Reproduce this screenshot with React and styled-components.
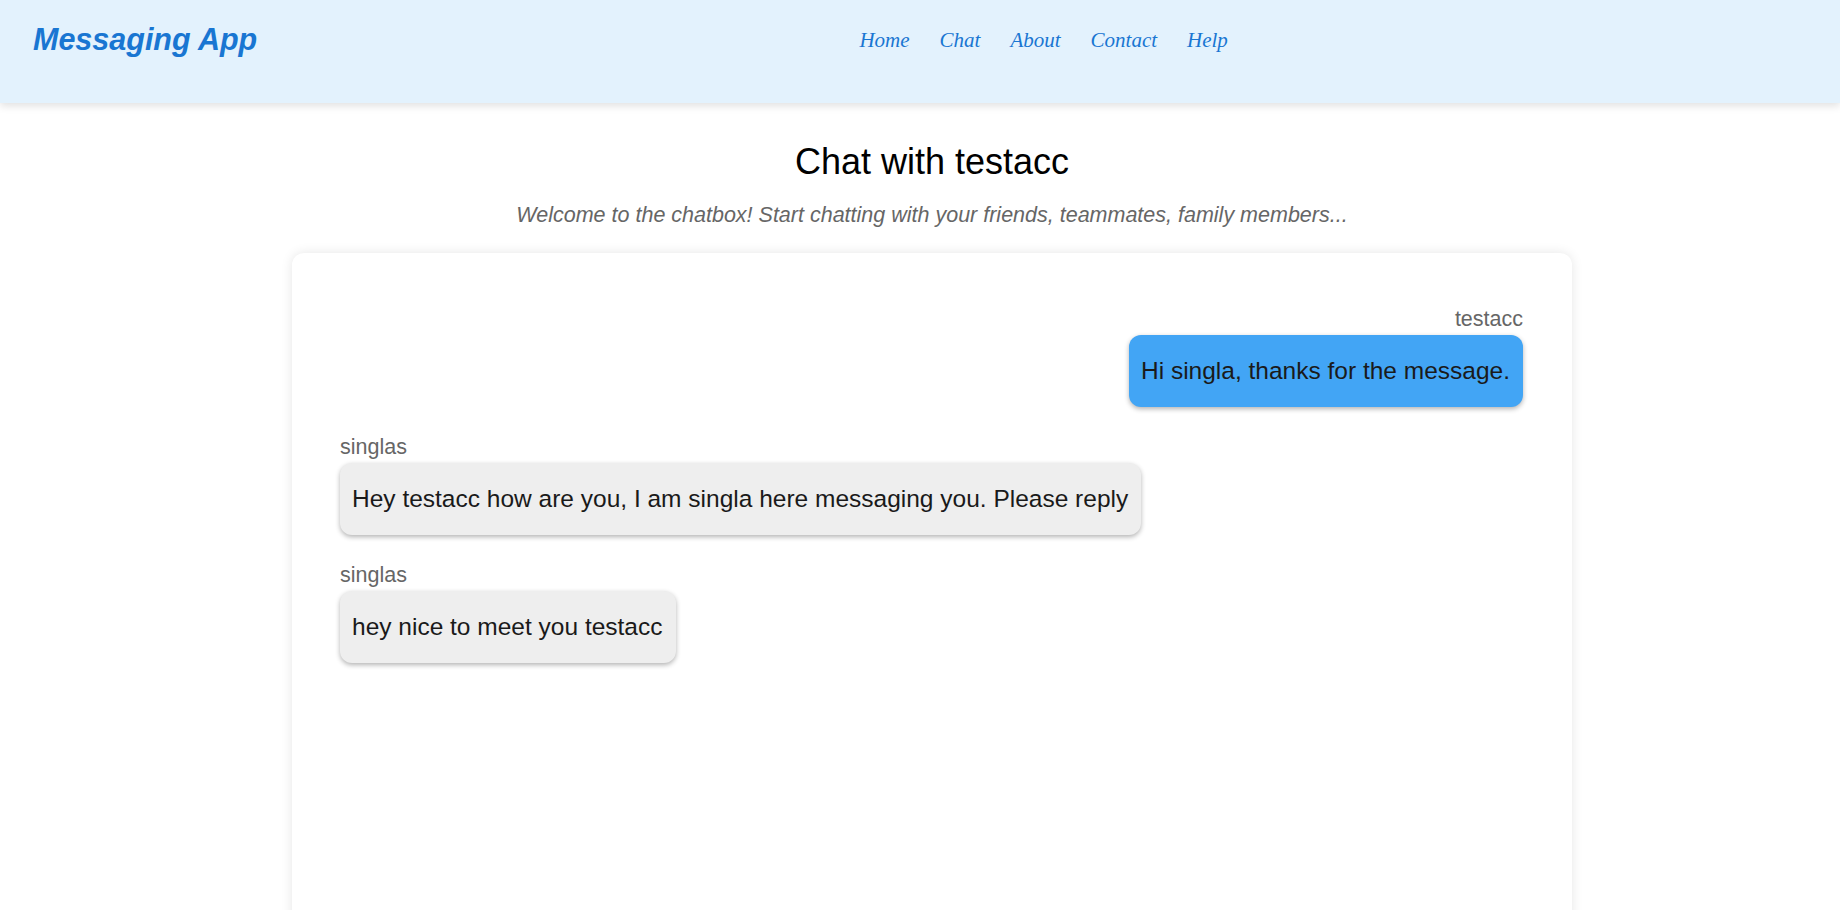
import React from "react"
import styled, { createGlobalStyle } from "styled-components"

//  global page styles
const GlobalStyle = createGlobalStyle`
  body {
    margin: 0;
    background: #ffffff;
    font-family: "Liberation Sans", Arial, sans-serif;
    overflow: hidden;
  }
`

const Header = styled.header`
  display: flex;
  align-items: flex-start;
  height: 103px;
  padding: 22px 33px 0;
  box-sizing: border-box;
  background: #e3f2fd;
  box-shadow: 0 3px 8px rgba(0, 0, 0, 0.12);
  position: relative;
  z-index: 1;
`

const Logo = styled.h1`
  margin: 0;
  font-size: 30.5px;
  font-weight: bold;
  font-style: italic;
  color: #1976d2;
  white-space: nowrap;
`

const Nav = styled.nav`
  flex: 1;
  display: flex;
  justify-content: center;
  padding-left: 23px;
  margin-top: 6px;
`

const NavLink = styled.a`
  padding: 0 15px;
  font-family: "Liberation Serif", "Times New Roman", serif;
  font-style: italic;
  font-size: 21px;
  color: #1976d2;
  text-decoration: none;
  cursor: pointer;
`

const Main = styled.main`
  display: flex;
  flex-direction: column;
  align-items: center;
  padding: 38px 0 0 24px;
`

const Title = styled.h2`
  margin: 0;
  font-size: 36px;
  font-weight: normal;
  color: #000;
`

const Subtitle = styled.p`
  margin: 20px 0 0;
  font-size: 21.5px;
  font-style: italic;
  color: #666;
`

const ChatBox = styled.section`
  width: 1280px;
  min-height: 720px;
  margin-top: 25px;
  padding: 54px 49px 48px 48px;
  box-sizing: border-box;
  background: #fff;
  border-radius: 12px;
  box-shadow: 0 0 12px rgba(0, 0, 0, 0.1);
  display: flex;
  flex-direction: column;
  gap: 28px;
`

const Message = styled.div`
  display: flex;
  flex-direction: column;
  align-items: ${p => (p.$mine ? "flex-end" : "flex-start")};
`

const Sender = styled.span`
  font-size: 21.5px;
  color: #666;
  margin-bottom: 3px;
`

const Bubble = styled.div`
  padding: 22px 13px 22px 12px;
  font-size: 24.5px;
  color: #1a1a1a;
  border-radius: 12px;
  background: ${p => (p.$mine ? "#42a5f5" : "#eeeeee")};
  box-shadow: 0 2px 5px rgba(0, 0, 0, 0.3);
`

const messages = [
  { from: "testacc", text: "Hi singla, thanks for the message.", mine: true },
  { from: "singlas", text: "Hey testacc how are you, I am singla here messaging you. Please reply" },
  { from: "singlas", text: "hey nice to meet you testacc" },
]

const App = () => {
  return (
    <>
      <GlobalStyle />
      <Header>
        <Logo>Messaging App</Logo>
        <Nav>
          {["Home", "Chat", "About", "Contact", "Help"].map(l => (
            <NavLink key={l}>{l}</NavLink>
          ))}
        </Nav>
      </Header>
      <Main>
        <Title>Chat with testacc</Title>
        <Subtitle>
          Welcome to the chatbox! Start chatting with your friends, teammates, family members...
        </Subtitle>
        <ChatBox>
          {messages.map((m, i) => (
            <Message key={i} $mine={m.mine}>
              <Sender>{m.from}</Sender>
              <Bubble $mine={m.mine}>{m.text}</Bubble>
            </Message>
          ))}
        </ChatBox>
      </Main>
    </>
  )
}

export default App
